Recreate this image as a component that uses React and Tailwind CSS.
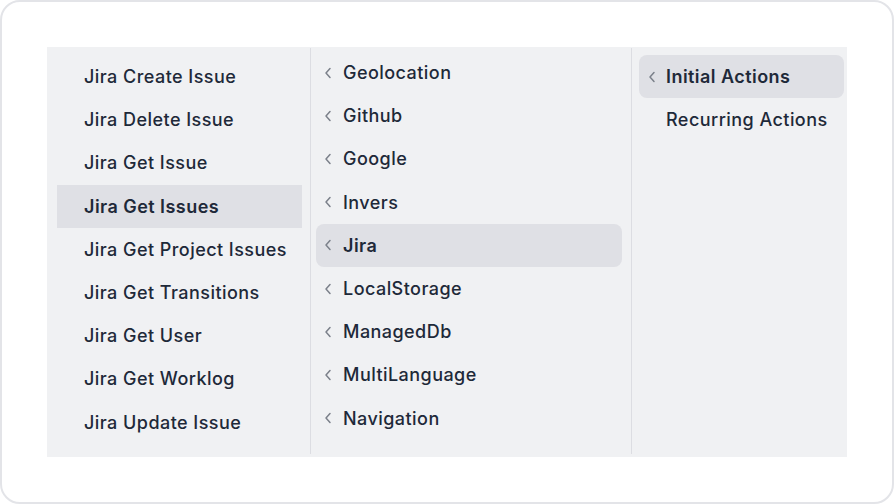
import React from "react";

const Chevron = () => (
  <svg width="8" height="12" viewBox="0 0 8 12" className="shrink-0" fill="none">
    <path d="M6 1.5 L2 6 L6 10.5" stroke="#7b808a" strokeWidth="1.5" strokeLinecap="round" strokeLinejoin="round" />
  </svg>
);

const col1 = [
  "Jira Create Issue",
  "Jira Delete Issue",
  "Jira Get Issue",
  "Jira Get Issues",
  "Jira Get Project Issues",
  "Jira Get Transitions",
  "Jira Get User",
  "Jira Get Worklog",
  "Jira Update Issue",
];
const col2 = [
  "Geolocation",
  "Github",
  "Google",
  "Invers",
  "Jira",
  "LocalStorage",
  "ManagedDb",
  "MultiLanguage",
  "Navigation",
];

export default function App() {
  return (
    <div className="w-[894px] h-[504px] bg-white" style={{ fontFamily: "Inter, 'Noto Sans', sans-serif" }}>
      <div className="w-full h-full rounded-[20px] border-2 border-[#e3e4e8] bg-white pt-[45px] pl-[45px] pr-[45px]">
        <div className="w-[800px] h-[410px] bg-[#f0f1f3] flex pt-[1px] pb-[3px]">
          <div className="w-[264px] border-r border-[#dcdde2] pt-[7px] pl-[10px] pr-[8px]">
            {col1.map((t) => (
              <div
                key={t}
                className={`h-[43.2px] flex items-center pl-[27px] text-[18px] tracking-[0.45px] text-[#1e2939] ${t === "Jira Get Issues" ? "bg-[#dfe0e5] font-semibold" : "font-medium"}`}
              >
                {t}
              </div>
            ))}
          </div>
          <div className="w-[321px] border-r border-[#dcdde2] pt-[3px] pl-[5px] pr-[9px]">
            {col2.map((t) => (
              <div
                key={t}
                className={`h-[43.2px] flex items-center pl-[8px] rounded-[8px] text-[18px] tracking-[0.45px] text-[#1e2939] ${t === "Jira" ? "bg-[#dfe0e5] font-semibold" : "font-medium"}`}
              >
                <Chevron />
                <span className="ml-[11px]">{t}</span>
              </div>
            ))}
          </div>
          <div className="flex-1 pt-[7px] pl-[7px] pr-[3px]">
            <div className="h-[43.2px] flex items-center pl-[9px] rounded-[8px] bg-[#dfe0e5] text-[18px] tracking-[0.45px] font-semibold text-[#1e2939]">
              <Chevron />
              <span className="ml-[10px]">Initial Actions</span>
            </div>
            <div className="h-[43.2px] flex items-center pl-[27px] text-[18px] tracking-[0.45px] font-medium text-[#1e2939]">
              Recurring Actions
            </div>
          </div>
        </div>
      </div>
    </div>
  );
}
